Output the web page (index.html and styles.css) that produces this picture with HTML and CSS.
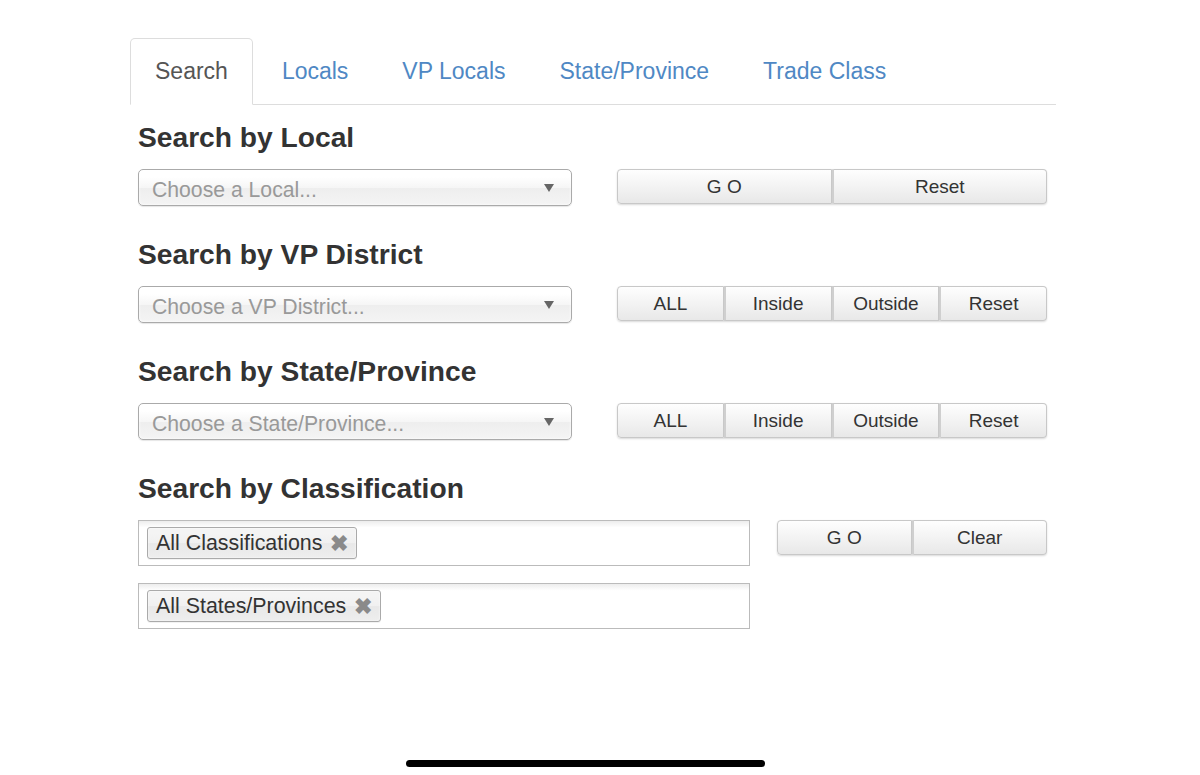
FILE: index.html
```html
<!DOCTYPE html>
<html>
<head>
<meta charset="utf-8">
<link rel="stylesheet" href="styles.css">
</head>
<body>
<div class="page">
  <ul class="tabs">
    <li class="tab active"><a>Search</a></li>
    <li class="tab"><a>Locals</a></li>
    <li class="tab"><a>VP Locals</a></li>
    <li class="tab"><a>State/Province</a></li>
    <li class="tab"><a>Trade Class</a></li>
  </ul>
  <div class="content">
    <section class="block">
      <h2>Search by Local</h2>
      <div class="row">
        <div class="select"><span>Choose a Local...</span><i class="arrow"></i></div>
        <div class="btns"><button>G O</button><button>Reset</button></div>
      </div>
    </section>
    <section class="block">
      <h2>Search by VP District</h2>
      <div class="row">
        <div class="select"><span>Choose a VP District...</span><i class="arrow"></i></div>
        <div class="btns"><button>ALL</button><button>Inside</button><button>Outside</button><button>Reset</button></div>
      </div>
    </section>
    <section class="block">
      <h2>Search by State/Province</h2>
      <div class="row">
        <div class="select"><span>Choose a State/Province...</span><i class="arrow"></i></div>
        <div class="btns"><button>ALL</button><button>Inside</button><button>Outside</button><button>Reset</button></div>
      </div>
    </section>
    <section class="block">
      <h2>Search by Classification</h2>
      <div class="row wide">
        <div class="multis">
          <div class="multi"><span class="tag">All Classifications <b class="x">✖</b></span></div>
          <div class="multi"><span class="tag">All States/Provinces <b class="x">✖</b></span></div>
        </div>
        <div class="btns small"><button>G O</button><button>Clear</button></div>
      </div>
    </section>
  </div>
</div>
<div class="home-bar"></div>
</body>
</html>
```

FILE: styles.css
```css
html, body {
  margin: 0;
  padding: 0;
  background: #fff;
  font-family: "Liberation Sans", Arial, Helvetica, sans-serif;
  color: #333;
}
.page {
  padding: 38px 0 0 130px;
  width: 926px;
}
.tabs {
  list-style: none;
  margin: 0;
  padding: 0;
  display: flex;
  border-bottom: 1px solid #ddd;
}
.tab {
  margin: 0 4px -1px 0;
}
.tab a {
  display: block;
  padding: 0 24px 1px;
  line-height: 64px;
  font-size: 23px;
  color: #4f88c4;
  border: 1px solid transparent;
  border-radius: 5px 5px 0 0;
}
.tab.active a {
  color: #555;
  background: #fff;
  border-color: #ddd #ddd transparent #ddd;
}
.content {
  padding-left: 8px;
}
.block h2 {
  margin: 16px 0 16px;
  font-size: 28.2px;
  line-height: 32px;
  font-weight: bold;
  color: #333;
}
.block + .block h2 {
  margin-top: 32px;
}
.row {
  display: flex;
  align-items: flex-start;
  gap: 45px;
}
.select {
  box-sizing: border-box;
  width: 434px;
  height: 37px;
  border: 1px solid #aaa;
  border-radius: 5px;
  background: linear-gradient(#fff 20%, #f6f6f6 50%, #eee 52%, #f4f4f4 100%);
  box-shadow: inset 0 0 3px #fff, 0 1px 1px rgba(0,0,0,0.1);
  display: flex;
  align-items: center;
  justify-content: space-between;
  padding: 4px 17px 0 13px;
  font-size: 21.2px;
  color: #999;
}
.arrow {
  width: 0;
  height: 0;
  border-left: 5px solid transparent;
  border-right: 5px solid transparent;
  border-top: 8px solid #666;
  margin-top: -3px;
}
.btns {
  display: flex;
  width: 430px;
  height: 35px;
  border-radius: 4px;
  box-shadow: 0 1px 2px rgba(0,0,0,0.15);
}
.btns button {
  flex: 1;
  margin: 0;
  font-family: inherit;
  font-size: 19px;
  color: #333;
  background: linear-gradient(#fefefe, #e8e8e8);
  border: 1px solid #c8c8c8;
  border-left-width: 0;
  border-radius: 0;
  padding: 0;
}
.btns button:first-child {
  border-left-width: 1px;
  border-radius: 4px 0 0 4px;
}
.btns button:last-child {
  border-radius: 0 4px 4px 0;
}
.btns button + button {
  border-left: 2px solid #cfcfcf;
}
.row.wide {
  gap: 27px;
}
.btns.small {
  width: 270px;
}
.multis {
  display: flex;
  flex-direction: column;
  gap: 17px;
}
.multi {
  box-sizing: border-box;
  width: 612px;
  height: 46px;
  border: 1px solid #bbb;
  background: linear-gradient(#eee 1%, #fff 15%);
  padding: 6px 8px;
}
.tag {
  display: inline-flex;
  align-items: center;
  box-sizing: border-box;
  height: 32px;
  padding: 1px 8px 0;
  border: 1px solid #aaa;
  border-radius: 3px;
  background: linear-gradient(#f4f4f4 20%, #f0f0f0 50%, #e8e8e8 52%, #eee 100%);
  box-shadow: inset 0 0 2px #fff, 0 1px 0 rgba(0,0,0,0.05);
  font-size: 21.4px;
  color: #333;
}
.x {
  font-size: 22px;
  line-height: 1;
  color: #8a8a8a;
  margin-left: 8px;
}
.home-bar {
  position: fixed;
  left: 406px;
  top: 760px;
  width: 359px;
  height: 7px;
  border-radius: 4px;
  background: #000;
}
```
